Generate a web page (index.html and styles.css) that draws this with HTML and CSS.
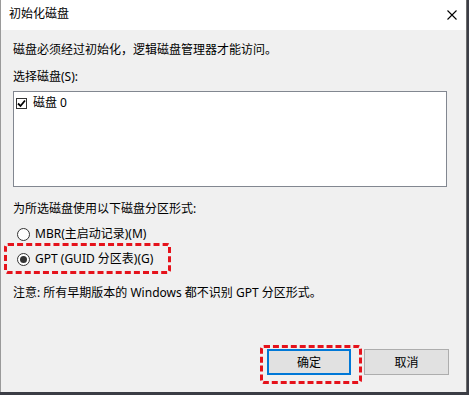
FILE: index.html
```html
<!DOCTYPE html>
<html lang="zh-CN">
<head>
<meta charset="utf-8">
<link rel="stylesheet" href="styles.css">
</head>
<body>
<div class="desktop">
  <div class="window">
    <div class="titlebar">
      <span class="title">初始化磁盘</span>
      <svg class="close" width="10" height="10" viewBox="0 0 10 10"><path d="M0.5 0.5 L9.5 9.5 M9.5 0.5 L0.5 9.5" stroke="#000" stroke-width="1.1" fill="none"/></svg>
    </div>
    <div class="content">
      <p class="line intro">磁盘必须经过初始化，逻辑磁盘管理器才能访问。</p>
      <p class="line label">选择磁盘(S):</p>
      <div class="listbox">
        <div class="item">
          <span class="check"><svg width="9" height="9" viewBox="0 0 9 9"><path d="M1 4.5 L3.5 7 L8 1.5" stroke="#000" stroke-width="1.8" fill="none"/></svg></span>
          <span>磁盘 0</span>
        </div>
      </div>
      <p class="line part-label">为所选磁盘使用以下磁盘分区形式:</p>
      <div class="radio-row mbr"><span class="radio"></span><span>MBR(主启动记录)(M)</span></div>
      <div class="radio-row gpt marked"><span class="radio on"></span><span>GPT (GUID 分区表)(G)</span></div>
      <p class="line note">注意: 所有早期版本的 Windows 都不识别 GPT 分区形式。</p>
      <div class="buttons">
        <button class="btn primary marked-btn">确定</button>
        <button class="btn">取消</button>
      </div>
    </div>
  </div>
</div>
</body>
</html>
```
FILE: styles.css
```css
*, *::before, *::after { box-sizing: border-box; }
html, body { margin: 0; padding: 0; }
body {
  width: 469px;
  height: 395px;
  overflow: hidden;
  background: #3b3d45;
  font-family: "Noto Sans", "Noto Sans CJK SC", sans-serif;
  font-size: 12px;
  color: #000;
}
.desktop { width: 469px; height: 395px; }
.window {
  width: 467px;
  height: 392px;
  background: #f0f0f0;
  border-left: 1px solid #9a9a9a;
  border-right: 1px solid #6d6d6d;
  display: flex;
  flex-direction: column;
}
.titlebar {
  height: 30px;
  flex: none;
  background: #fff;
  display: flex;
  align-items: center;
  justify-content: space-between;
  padding: 0 9px 0 8px;
}
.title { line-height: 16px; margin-top: -2px; }
.close { margin-top: -1px; }
.content {
  flex: 1;
  display: flex;
  flex-direction: column;
  padding: 12px 17px 17px 12px;
}
.line { margin: 0; line-height: 16px; }
.label { margin-top: 11px; }
.listbox {
  margin-top: 6px;
  width: 434px;
  height: 96px;
  background: #fff;
  border: 1px solid #828790;
  padding: 5px 2px;
}
.item { display: flex; align-items: center; gap: 6px; line-height: 12px; }
.check {
  width: 11px; height: 11px;
  border: 1px solid #333;
  background: #fff;
  display: flex; align-items: center; justify-content: center;
}
.part-label { margin-top: 14px; }
.radio-row {
  display: flex;
  align-items: center;
  gap: 5px;
  line-height: 16px;
  margin-top: 9px;
  padding-left: 4px;
  position: relative;
  align-self: flex-start;
}
.radio {
  width: 13px; height: 13px;
  border: 1px solid #333;
  border-radius: 50%;
  background: #fff;
  display: flex; align-items: center; justify-content: center;
}
.radio.on::after {
  content: "";
  width: 7px; height: 7px;
  border-radius: 50%;
  background: #333;
}
.marked::after {
  content: "";
  position: absolute;
  left: -9px; top: -8px;
  width: 167px; height: 31px;
  border: 3px dashed #e5121b;
  border-radius: 4px;
}
.note { margin-top: 18px; }
.buttons {
  margin-top: auto;
  display: flex;
  justify-content: flex-end;
  gap: 13px;
}
.btn {
  width: 85px;
  height: 26px;
  background: #e1e1e1;
  border: 1px solid #adadad;
  font: inherit;
  color: #000;
  padding: 0;
  position: relative;
}
.btn.primary { border: 2px solid #0078d7; width: 84px; }
.marked-btn::after {
  content: "";
  position: absolute;
  left: -9px; top: -6px;
  width: 102px; height: 39px;
  border: 3px dashed #e5121b;
  border-radius: 4px;
}
```
